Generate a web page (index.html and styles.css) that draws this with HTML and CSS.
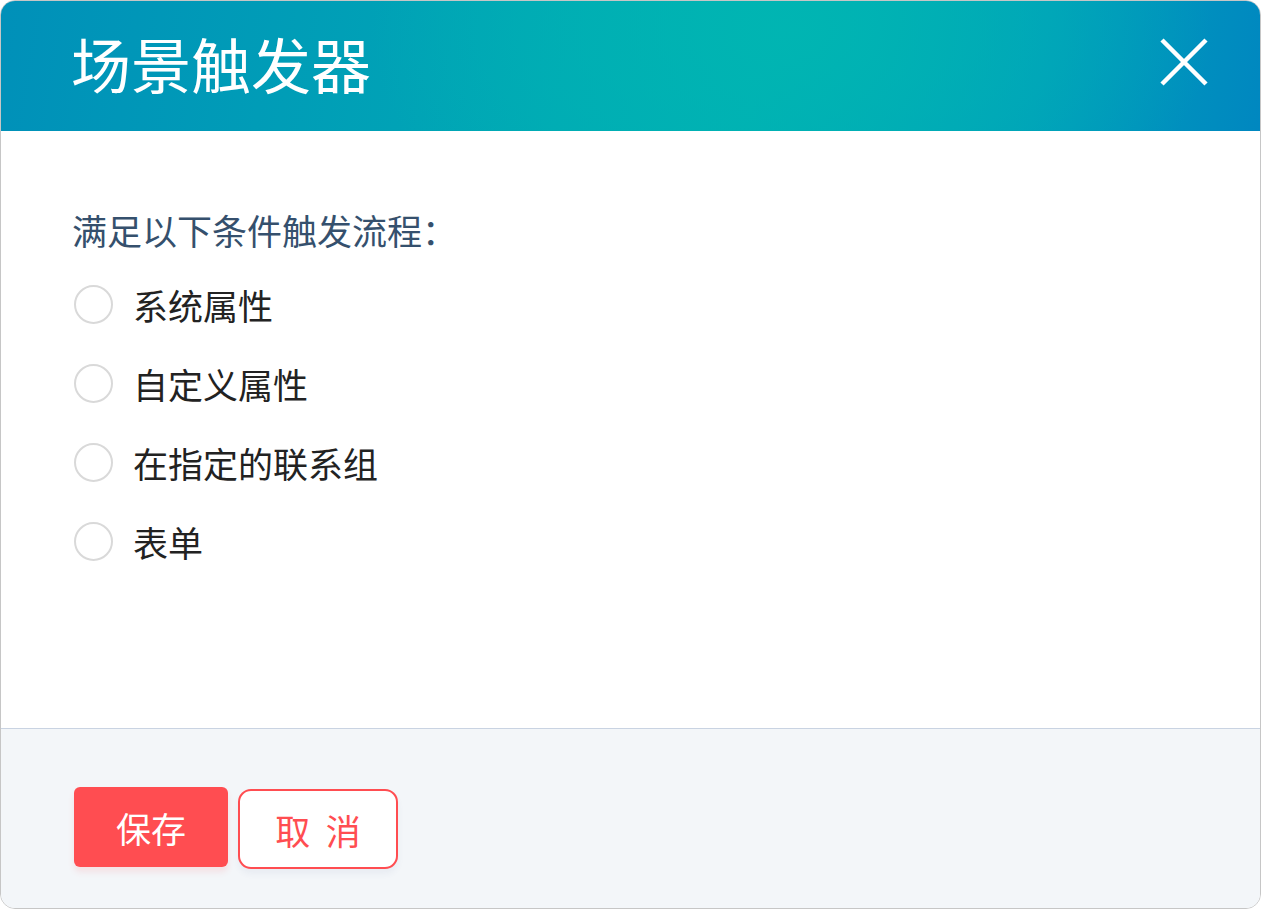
FILE: index.html
```html
<!DOCTYPE html>
<html lang="zh-CN">
<head>
  <meta charset="UTF-8" />
  <meta name="viewport" content="width=device-width, initial-scale=1" />
  <title>场景触发器</title>
  <link rel="stylesheet" href="styles.css">
</head>
<body>
  <div class="dialog">
    <div class="dialog-header">
      <h1 class="dialog-title">场景触发器</h1>
      <button class="close-btn" aria-label="关闭">
        <svg width="48" height="48" viewBox="0 0 48 48">
          <path d="M2 2 L46 46 M46 2 L2 46" stroke="#fff" stroke-width="4.5" fill="none" />
        </svg>
      </button>
    </div>
    <div class="dialog-body">
      <div class="cond-label">满足以下条件触发流程：</div>
      <label class="radio-row"><span class="radio"></span><span class="radio-text">系统属性</span></label>
      <label class="radio-row"><span class="radio"></span><span class="radio-text">自定义属性</span></label>
      <label class="radio-row"><span class="radio"></span><span class="radio-text">在指定的联系组</span></label>
      <label class="radio-row"><span class="radio"></span><span class="radio-text">表单</span></label>
    </div>
    <div class="dialog-footer">
      <button class="btn btn-save">保存</button>
      <button class="btn btn-cancel">取&nbsp;&nbsp;消</button>
    </div>
  </div>
</body>
</html>
```

FILE: styles.css
```css
* {
  margin: 0; padding: 0; box-sizing: border-box;
}
html, body {
  width: 100%; height: 100%;
  overflow: hidden;
  background: #fff;
  font-family: 'Noto Sans CJK SC', 'Noto Sans', sans-serif;
}
.dialog {
  width: 1261px;
  height: 909px;
  border: 1px solid #c6c6c6;
  border-radius: 15px;
  overflow: hidden;
  display: flex;
  flex-direction: column;
  background: #fff;
}
.dialog-header {
  height: 130px;
  flex: none;
  display: flex;
  align-items: center;
  justify-content: space-between;
  padding: 0 52px 0 70px;
  background:
    radial-gradient(ellipse 420px 260px at 790px 30px, rgba(0, 182, 178, 0.9), rgba(0, 178, 178, 0) 100%),
    linear-gradient(100deg, #0090b9 0%, #00a9b5 45%, #00aeb4 60%, #009fbb 82%, #0087c0 100%);
}
.dialog-title {
  color: #fff;
  font-size: 60px;
  font-weight: 400;
  line-height: 1;
  margin-top: -6px;
}
.close-btn {
  background: none;
  border: none;
  width: 48px;
  height: 48px;
  display: flex;
  margin-top: -8px;
  cursor: pointer;
}
.dialog-body {
  flex: 1;
  padding: 79px 73px 0;
}
.cond-label {
  font-size: 35px;
  line-height: 40px;
  color: #35506d;
  margin: 0 0 15px -2px;
}
.radio-row {
  height: 79px;
  display: flex;
  align-items: center;
  gap: 20px;
  cursor: pointer;
}
.radio {
  width: 39px;
  height: 39px;
  border: 2px solid #d9d9d9;
  border-radius: 50%;
  background: #fff;
  flex: none;
}
.radio-text {
  font-size: 35px;
  color: #222;
  line-height: 40px;
}
.dialog-footer {
  height: 180px;
  flex: none;
  border-top: 1px solid #c9d3e2;
  background: #f3f6f9;
  padding: 58px 73px 0;
  display: flex;
  align-items: flex-start;
  gap: 10px;
}
.btn {
  height: 80px;
  font-family: inherit;
  font-size: 35px;
  cursor: pointer;
}
.btn-save {
  width: 154px;
  background: #ff4d51;
  color: #fff;
  border: none;
  border-radius: 6px;
  box-shadow: 0 5px 6px rgba(255, 77, 81, 0.12);
}
.btn-cancel {
  width: 160px;
  margin-top: 2px;
  background: #fff;
  color: #ff4d51;
  border: 2px solid #ff4d51;
  border-radius: 13px;
  box-shadow: 0 5px 6px rgba(60, 90, 140, 0.06);
}
```
